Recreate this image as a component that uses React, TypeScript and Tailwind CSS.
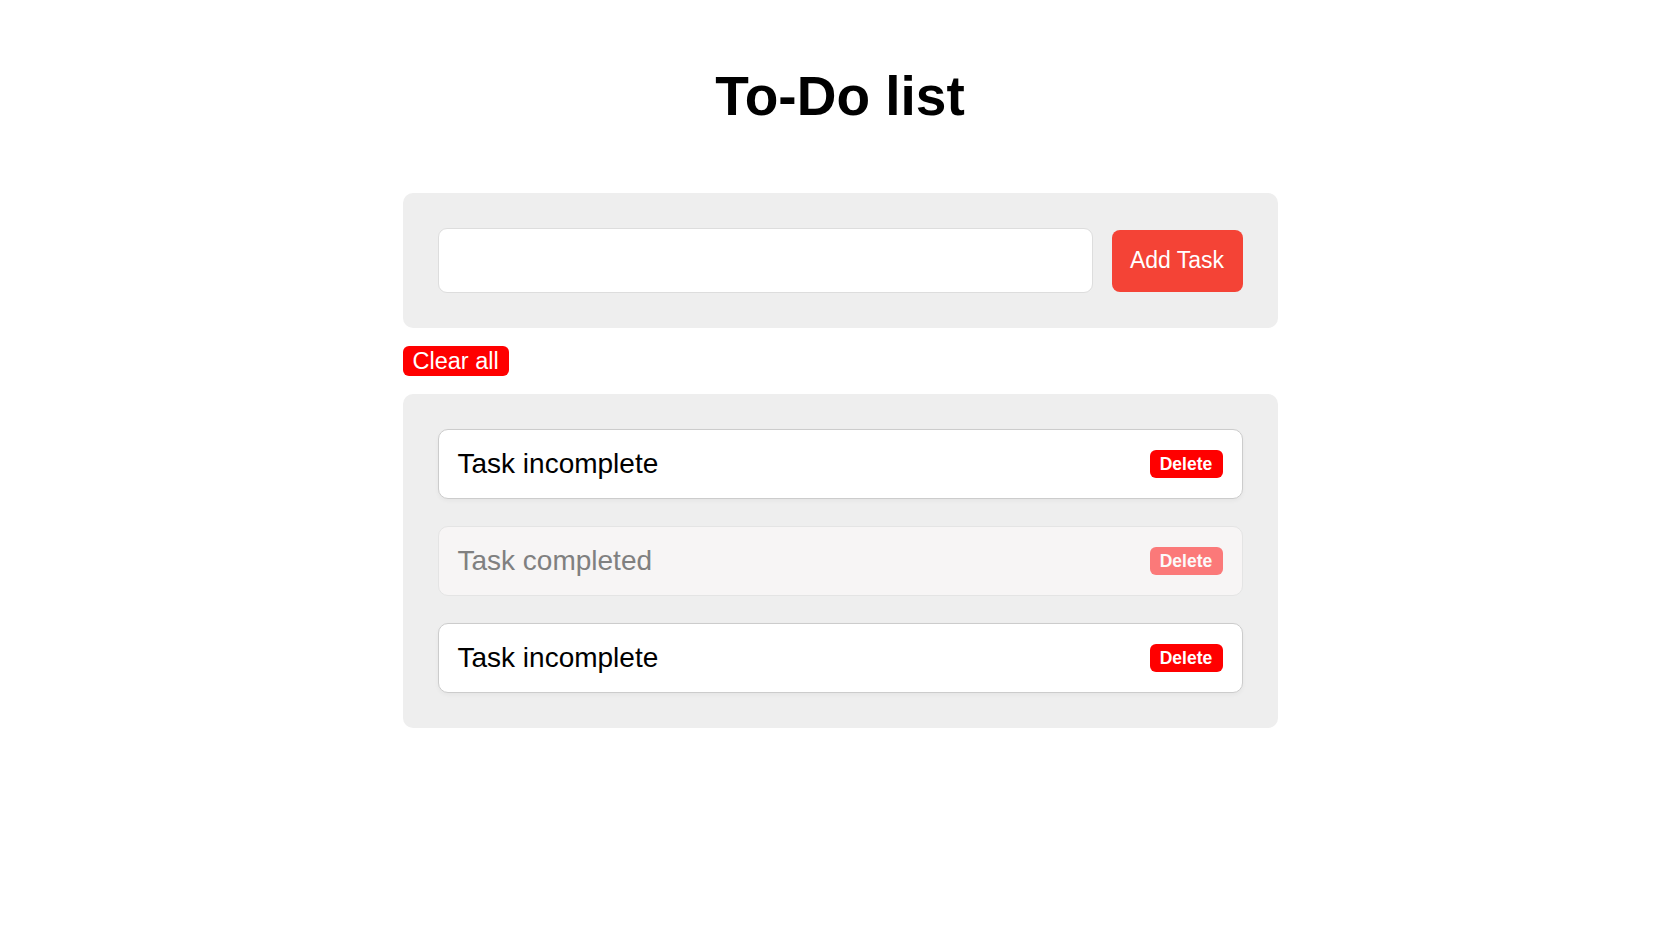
import React from 'react';

const tasks = [
  { id: 1, text: 'Task incomplete', done: false },
  { id: 2, text: 'Task completed', done: true },
  { id: 3, text: 'Task incomplete', done: false },
];

const App = () => {
  return (
    <div className="min-h-screen bg-white font-['Liberation_Sans',Arial,sans-serif]">
      <h1 className="pt-[69px] text-center text-[55px] font-bold leading-none text-black">To-Do list</h1>

      <div className="mx-auto mt-[69px] w-[875px]">
        {/* Input panel */}
        <div className="flex items-center gap-[19px] rounded-[10px] bg-[#eeeeee] p-[35px]">
          <input
            type="text"
            className="h-[65px] flex-1 rounded-[9px] border border-[#dddddd] bg-white px-4 text-[22px] outline-none"
          />
          <button className="h-[62px] w-[131px] rounded-[8px] bg-[#f44336] text-[23px] text-white">
            Add Task
          </button>
        </div>

        <button className="mt-[18px] h-[30px] rounded-[6px] bg-[#ff0000] px-[10px] text-[23.5px] leading-[30px] text-white">
          Clear all
        </button>

        {/* Task list */}
        <div className="mt-[18px] flex flex-col gap-[27px] rounded-[10px] bg-[#eeeeee] p-[35px]">
          {tasks.map((task) => (
            <div
              key={task.id}
              className={`flex h-[70px] items-center justify-between rounded-[10px] border px-[19px] ${
                task.done
                  ? 'border-[#e4e4e4] bg-[#f7f5f5] text-[#808080]'
                  : 'border-[#cccccc] bg-white text-black shadow-[0_2px_4px_rgba(0,0,0,0.04)]'
              }`}
            >
              <span className="text-[28px]">{task.text}</span>
              <button
                className={`h-[28px] w-[73px] rounded-[6px] bg-[#ff0000] text-[17.5px] font-bold text-white ${
                  task.done ? 'opacity-50' : ''
                }`}
              >
                Delete
              </button>
            </div>
          ))}
        </div>
      </div>
    </div>
  );
};

export default App;
